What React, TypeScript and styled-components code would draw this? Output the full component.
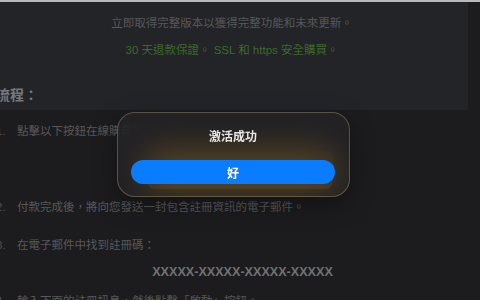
import React from 'react'
import styled, { createGlobalStyle } from 'styled-components'

const GlobalStyle = createGlobalStyle`
  html, body {
    margin: 0;
    padding: 0;
    background: #1c1c1e;
    overflow: hidden;
  }
  body {
    font-family: "Liberation Sans", "Noto Sans CJK TC", sans-serif;
    border-top: 2px solid #b9b9bb;
  }
`

const Page = styled.div`
  width: 472px;
  margin-left: -4px;
  height: 298px;
  overflow: hidden;
`

const Banner = styled.section`
  background: #232427;
  height: 108px;
  padding-top: 13px;
  box-sizing: border-box;
`

const Line = styled.p<{ $tone?: 'grey' | 'green' }>`
  margin: 0 0 11px;
  text-align: center;
  font-size: 11.5px;
  line-height: 16px;
  color: ${(p) => (p.$tone === 'green' ? '#3c6a2a' : '#575759')};
`

const Heading = styled.h3`
  margin: 28px 0 0;
  font-size: 14px;
  line-height: 18px;
  font-weight: bold;
  color: #78787a;
`

const Steps = styled.ol`
  list-style: none;
  margin: 0;
  padding: 13px 0 0;
`

const Step = styled.li<{ $gap?: number }>`
  display: grid;
  grid-template-columns: 21px 1fr;
  margin-bottom: ${(p) => p.$gap ?? 22}px;
  font-size: 11.5px;
  line-height: 16px;
  color: #58585a;
`

const Num = styled.span`
  color: #505052;
`

const BuyButton = styled.div`
  width: 186px;
  height: 38px;
  margin: 12px 0 0 130px;
  border-radius: 8px;
  background: #eeac18;
`

const Code = styled.div`
  grid-column: 2;
  margin-top: 11px;
  text-align: center;
  font-size: 12.6px;
  font-weight: bold;
  color: #717173;
`

const Dialog = styled.div`
  position: fixed;
  left: 117px;
  top: 112px;
  width: 233px;
  height: 85px;
  box-sizing: border-box;
  padding: 16px 14px 0 13px;
  border-radius: 18px;
  border: 1px solid rgba(160, 145, 110, 0.45);
  background: rgba(36, 35, 38, 0.74);
  backdrop-filter: blur(16px);
  box-shadow: 0 8px 24px rgba(0, 0, 0, 0.35);
  display: flex;
  flex-direction: column;
  align-items: stretch;
`

const Title = styled.div`
  text-align: center;
  font-size: 12px;
  line-height: 16px;
  font-weight: bold;
  color: #e6e6e6;
`

const OkButton = styled.button`
  margin-top: 15px;
  height: 24px;
  border: none;
  border-radius: 12px;
  background: #0a7cff;
  color: #ffffff;
  font-family: inherit;
  font-size: 12px;
  font-weight: bold;
  padding: 0;
`

export default function App() {
  return (
    <>
      <GlobalStyle />
      <Page>
        <Banner>
          <Line>立即取得完整版本以獲得完整功能和未來更新。</Line>
          <Line $tone="green">30 天退款保證。 SSL 和 https 安全購買。</Line>
          <Heading>流程：</Heading>
        </Banner>
        <Steps>
          <Step $gap={10}>
            <Num>1.</Num>
            <span>
              點擊以下按鈕在線購買。
              <BuyButton />
            </span>
          </Step>
          <Step>
            <Num>2.</Num>
            <span>付款完成後，將向您發送一封包含註冊資訊的電子郵件。</span>
          </Step>
          <Step $gap={13}>
            <Num>3.</Num>
            <span>在電子郵件中找到註冊碼：</span>
            <Code>XXXXX-XXXXX-XXXXX-XXXXX</Code>
          </Step>
          <Step>
            <Num>4.</Num>
            <span>輸入下面的註冊訊息，然後點擊「啟動」按鈕。</span>
          </Step>
        </Steps>
      </Page>
      <Dialog>
        <Title>激活成功</Title>
        <OkButton>好</OkButton>
      </Dialog>
    </>
  )
}
